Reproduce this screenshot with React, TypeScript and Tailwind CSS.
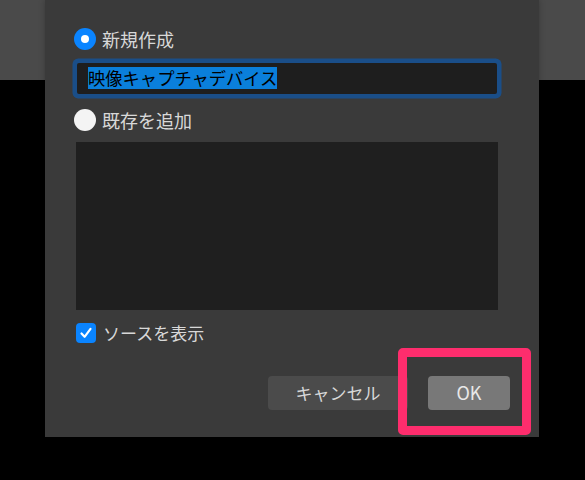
import React from "react";

const font = { fontFamily: '"Noto Sans CJK JP", "Noto Sans", sans-serif' };

function Radio({ checked }: { checked: boolean }) {
  return checked ? (
    <span className="flex h-[22px] w-[22px] shrink-0 items-center justify-center rounded-full bg-[#0a84ff]">
      <span className="h-[8px] w-[8px] rounded-full bg-white" />
    </span>
  ) : (
    <span className="h-[22px] w-[22px] shrink-0 rounded-full bg-[#f4f4f4]" />
  );
}

export default function App() {
  return (
    <div
      className="relative h-[480px] w-[585px] overflow-hidden bg-black"
      style={font}
    >
      <div className="h-[80px] w-full bg-[#4a4a4a]" />

      <div className="absolute left-[45px] top-0 flex h-[437px] w-[494px] flex-col bg-[#3a3a3a] pl-[29px] pr-[29px] pt-[28px] shadow-[0_0_6px_rgba(0,0,0,0.25)]">
        <label className="flex h-[22px] items-center gap-[6px]">
          <Radio checked />
          <span className="text-[18px] leading-none text-[#d8d8d8]">新規作成</span>
        </label>

        <div className="ml-[3px] mt-[12.5px] flex h-[31px] w-[420px] items-center rounded-[2px] bg-[#1e1e1e] pl-[11px] ring-[4.5px] ring-[#1a4e88]">
          <span className="bg-[#0a7fdb] text-[17.3px] leading-[22px] text-black">
            映像キャプチャデバイス
          </span>
        </div>

        <label className="mt-[15px] flex h-[22px] items-center gap-[6px]">
          <Radio checked={false} />
          <span className="text-[18px] leading-none text-[#d8d8d8]">既存を追加</span>
        </label>

        <div className="ml-[2px] mt-[11px] h-[168px] w-[422px] bg-[#1f1f1f]" />

        <label className="ml-[2px] mt-[13px] flex h-[20px] items-center gap-[7px]">
          <span className="flex h-[20px] w-[20px] shrink-0 items-center justify-center rounded-[4px] bg-[#0a84ff]">
            <svg width="14" height="14" viewBox="0 0 14 14" fill="none">
              <path
                d="M2.5 7.5 L5.6 10.8 L11.5 2.8"
                stroke="white"
                strokeWidth="2.2"
                strokeLinecap="round"
                strokeLinejoin="round"
              />
            </svg>
          </span>
          <span className="text-[17px] leading-none text-[#d8d8d8]">ソースを表示</span>
        </label>

        <div className="mt-[33px] flex justify-end gap-[20px]">
          <button className="flex h-[34px] w-[140px] items-center justify-center rounded-[4px] bg-[#4b4b4b] text-[17px] text-[#d8d8d8]">
            キャンセル
          </button>
          <button className="flex h-[34px] w-[82px] items-center justify-center rounded-[4px] bg-[#787878] text-[18px] text-[#e8e8e8]">
            OK
          </button>
        </div>
      </div>

      <div className="pointer-events-none absolute left-[398px] top-[348px] h-[87px] w-[133px] rounded-[5px] border-[9.5px] border-[#fe2d6d]" />
    </div>
  );
}
